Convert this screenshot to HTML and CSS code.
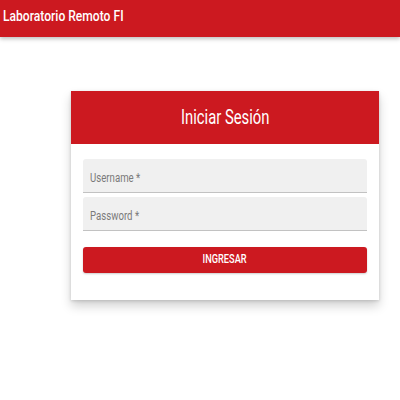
FILE: index.html
```html
<!DOCTYPE html>
<html lang="es">
<head>
<meta charset="utf-8">
<title>Laboratorio Remoto FI</title>
<link rel="stylesheet" href="styles.css">
</head>
<body>
<header class="appbar">
  <span class="appbar-title">Laboratorio Remoto FI</span>
</header>
<main class="page">
  <section class="card">
    <div class="card-head">
      <h1 class="card-title">Iniciar Sesión</h1>
    </div>
    <form class="card-body">
      <label class="field"><span class="field-label">Username *</span></label>
      <label class="field"><span class="field-label">Password *</span></label>
      <button type="button" class="btn"><span class="btn-text">INGRESAR</span></button>
    </form>
  </section>
</main>
</body>
</html>
```

FILE: styles.css
```css
* { box-sizing: border-box; }
html, body { margin: 0; padding: 0; background: #fff; }
body { font-family: Roboto, "Noto Sans", sans-serif; width: 400px; height: 400px; overflow: hidden; }

.appbar {
  height: 37px;
  background: #cc1920;
  display: flex;
  align-items: center;
  padding-left: 3px;
  padding-bottom: 6px;
  box-shadow: 0 2px 4px rgba(0,0,0,0.25);
  position: relative;
}
.appbar-title {
  display: inline-block;
  color: #fff;
  font-size: 15.5px;
  font-weight: 500;
  transform: scaleX(0.78);
  transform-origin: left center;
  white-space: nowrap;
}

.page {
  padding: 54px 21px 0 71px;
}
.card {
  width: 308px;
  height: 209px;
  background: #fff;
  box-shadow: 0 6px 10px rgba(0,0,0,0.18), 0 1px 3px rgba(0,0,0,0.15);
}
.card-head {
  height: 53px;
  background: #cc1920;
  display: flex;
  align-items: center;
  justify-content: center;
}
.card-title {
  margin: 0;
  color: #fff;
  font-size: 19.5px;
  font-weight: 400;
  transform: scaleX(0.76);
  white-space: nowrap;
}
.card-body {
  padding: 15px 12px 0 12px;
  display: flex;
  flex-direction: column;
  gap: 4px;
  margin: 0;
}
.field {
  height: 34px;
  background: #f0f0f0;
  border-bottom: 1.5px solid #c2c2c2;
  padding: 8px 0 0 7px;
  display: block;
  border-radius: 3px 3px 0 0;
}
.field-label {
  display: inline-block;
  color: #7a7a7a;
  font-size: 12.5px;
  transform: scaleX(0.77);
  transform-origin: left center;
  white-space: nowrap;
}
.btn {
  margin-top: 12px;
  height: 26px;
  border: none;
  border-radius: 3px;
  background: #cc1920;
  color: #fff;
  font-family: Roboto, sans-serif;
  font-size: 12px;
  font-weight: 500;
  box-shadow: 0 1px 2px rgba(0,0,0,0.2);
  padding: 0 0 2px 0;
}
.btn-text {
  display: inline-block;
  transform: scaleX(0.77);
}
```
